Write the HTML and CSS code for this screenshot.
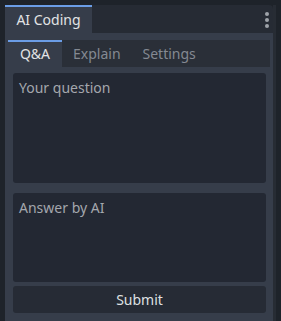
FILE: index.html
```html
<!DOCTYPE html>
<html>
<head>
<meta charset="utf-8">
<link rel="stylesheet" href="styles.css">
</head>
<body>
<div class="dock-row">
  <div class="dock">
    <div class="dock-tabs">
      <div class="dock-tab active">AI Coding</div>
      <div class="dock-tabbar-rest">
        <span class="menu-dots"><i></i><i></i><i></i></span>
      </div>
    </div>
    <div class="dock-panel">
      <div class="tabs">
        <div class="tab active">Q&amp;A</div>
        <div class="tab">Explain</div>
        <div class="tab">Settings</div>
      </div>
      <div class="tab-panel">
        <textarea class="field question" placeholder="Your question"></textarea>
        <textarea class="field answer" placeholder="Answer by AI"></textarea>
        <button class="submit">Submit</button>
      </div>
    </div>
  </div>
  <div class="split"></div>
</div>
</body>
</html>
```

FILE: styles.css
```css
html, body {
  margin: 0;
  padding: 0;
  height: 100%;
  overflow: hidden;
}
body {
  background: #1e232a;
  font-family: "Noto Sans", "Open Sans", sans-serif;
  font-size: 14px;
  color: #dfe0e2;
}
.dock-row {
  display: flex;
  height: 100%;
  padding: 5px 0 0 5px;
  box-sizing: border-box;
}
.dock {
  width: 268px;
  display: flex;
  flex-direction: column;
}
.split {
  width: 3px;
  background: #272c34;
}
.dock-tabs {
  display: flex;
  height: 28px;
}
.dock-tab {
  width: 87px;
  box-sizing: border-box;
  background: #363d4a;
  border-top: 2px solid #6b9de6;
  display: flex;
  align-items: center;
  justify-content: center;
  padding-bottom: 1px;
  color: #e2e3e5;
}
.dock-tabbar-rest {
  flex: 1;
  background: #262b34;
  border-top-right-radius: 4px;
  display: flex;
  justify-content: flex-end;
  padding-right: 4px;
}
.menu-dots {
  display: flex;
  flex-direction: column;
  gap: 2px;
  padding-top: 7px;
}
.menu-dots i {
  width: 4px;
  height: 4px;
  border-radius: 50%;
  background: #9ea2a8;
}
.dock-panel {
  flex: 1;
  background: #363d4a;
  padding: 7px 3px 0 3px;
  display: flex;
  flex-direction: column;
}
.tabs {
  display: flex;
  height: 27px;
  background: #2a2f38;
}
.tab {
  display: flex;
  align-items: center;
  padding: 0 10px 1px 10px;
  color: #848992;
  box-sizing: border-box;
}
.tab.active {
  background: #363d4a;
  border-top: 2px solid #6b9de6;
  color: #e2e3e5;
  width: 54px;
  justify-content: center;
  padding: 0 0 3px 0;
}
.tab:nth-child(2) {
  padding-left: 11px;
}
.tab:nth-child(3) {
  padding-left: 12px;
}
.tab-panel {
  flex: 1;
  display: flex;
  flex-direction: column;
  padding: 6px 4px 0 5px;
}
.field {
  display: block;
  box-sizing: border-box;
  width: 100%;
  resize: none;
  border: none;
  outline: none;
  background: #232833;
  border-radius: 3px;
  padding: 5px 6px;
  margin: 0;
  font-family: "Noto Sans", "Open Sans", sans-serif;
  font-size: 14px;
  line-height: 20px;
  color: #dfe0e2;
}
.field::placeholder {
  color: #a4a7ad;
  opacity: 1;
}
.question {
  height: 110px;
}
.answer {
  height: 89px;
  margin-top: 10px;
}
.submit {
  margin-top: 4px;
  height: 27px;
  border: none;
  border-radius: 3px;
  background: #262b35;
  color: #dfe0e2;
  font-family: "Noto Sans", "Open Sans", sans-serif;
  font-size: 14px;
  padding: 0 0 1px 0;
}
```
